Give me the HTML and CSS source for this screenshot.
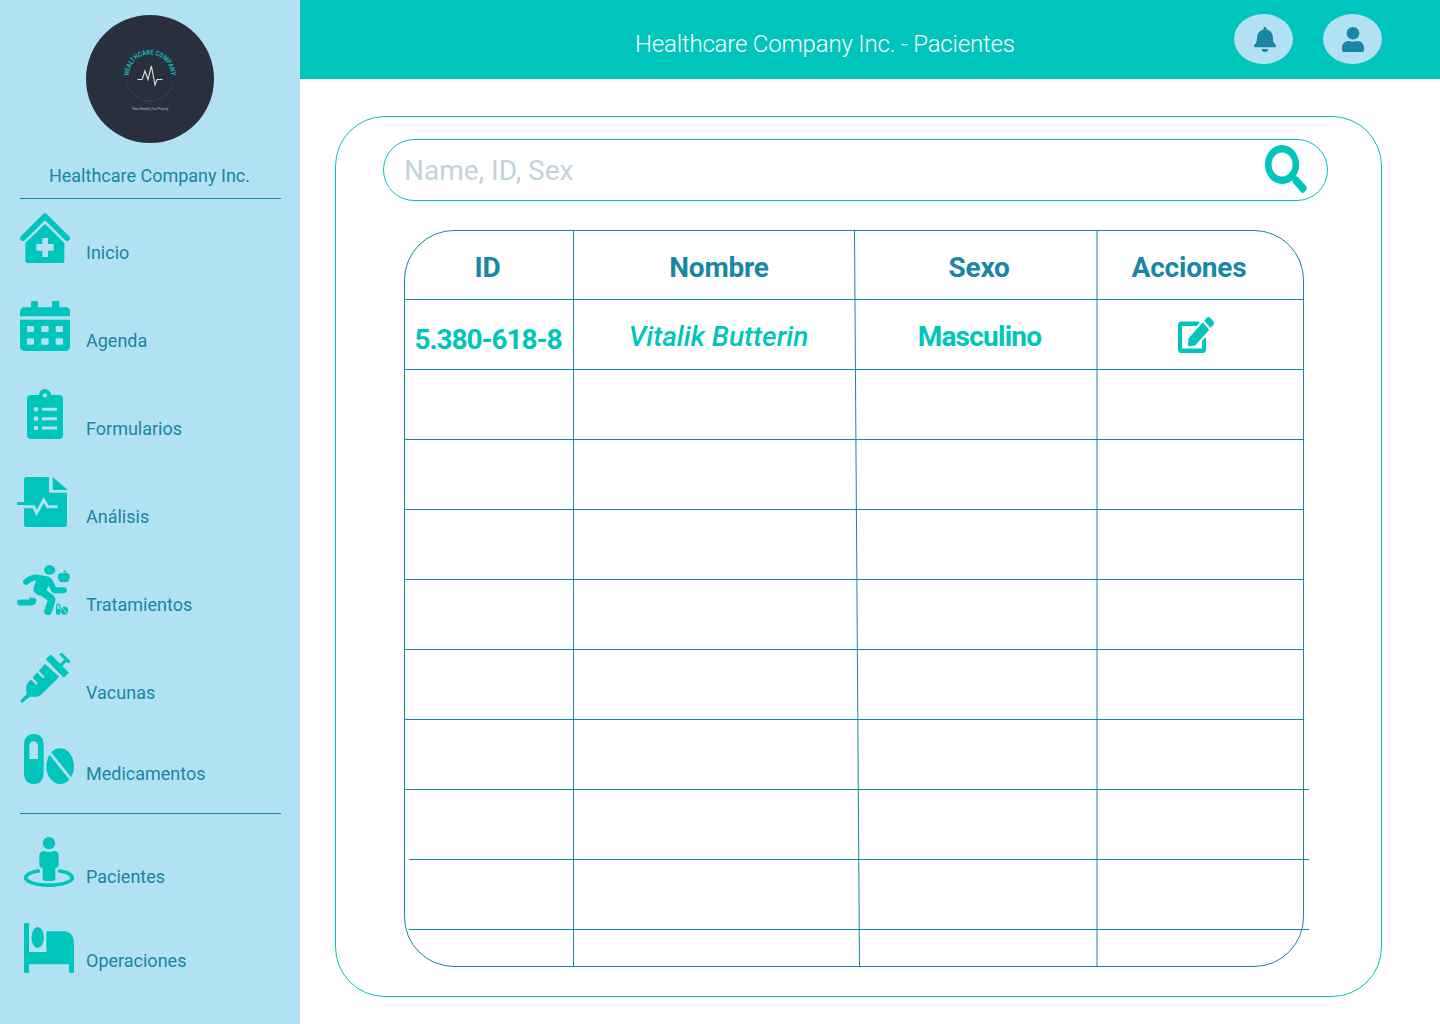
FILE: index.html
```html
<!DOCTYPE html>
<html lang="es">
<head>
<meta charset="utf-8">
<title>Healthcare Company Inc. - Pacientes</title>
<link rel="stylesheet" href="styles.css">
</head>
<body>
<div class="app">
  <aside class="sidebar">
    <svg class="logo" viewBox="0 0 128 128">
      <defs><path id="arc" d="M43 60.500A21 21 0 0 1 85 60.500"/></defs>
      <circle cx="64" cy="64" r="64" fill="#2a303b"/>
      <text class="logo-name"><textPath href="#arc" textLength="65.500" lengthAdjust="spacingAndGlyphs">HEALTHCARE COMPANY</textPath></text>
      <path d="M51.500 64.500h4.500l3-8.500 3 8.500L65.400 51l3.600 19 2-5.500h5.500" fill="none" stroke="#c9ece8" stroke-width="1.100"/>
      <path d="M41.200 69.500A24 24 0 0 0 86.800 69.500" fill="none" stroke="#1f7f8b" stroke-width=".8" stroke-dasharray="1 1.200"/>
      <text class="logo-tag" x="46" y="94.500" textLength="36.500" lengthAdjust="spacingAndGlyphs">Your Health, Our Priority</text>
    </svg>
    <div class="company">Healthcare Company Inc.</div>
    <nav class="menu">
      <a class="item"><svg class="icon" viewBox="0 0 150 150"><path d="M8.500 76L75 9.500l66.500 66.500" fill="none" stroke="currentColor" stroke-width="17" stroke-linejoin="round" stroke-linecap="round"/><path fill-rule="evenodd" d="M75 33l58 57v55q0 5-5 5H21q-5 0-5-5V90zM67 75v18H49v20h18v19h17v-19h17V93H84V75z"/></svg><span>Inicio</span></a>
      <a class="item"><svg class="icon" viewBox="0 0 150 150"><path d="M0 46V33q0-14 14-14h19V4q0-4 4-4h13q4 0 4 4v15h42V4q0-4 4-4h14q4 0 4 4v15h18q14 0 14 14v13z"/><path fill-rule="evenodd" d="M0 56h150v79q0 15-15 15H15q-15 0-15-15zM24 75q-3 0-3 3v12q0 3 3 3h15q3 0 3-3V78q0-3-3-3zm43 0q-3 0-3 3v12q0 3 3 3h16q3 0 3-3V78q0-3-3-3zm43 0q-3 0-3 3v12q0 3 3 3h16q3 0 3-3V78q0-3-3-3zM24 112q-3 0-3 3v13q0 3 3 3h15q3 0 3-3v-13q0-3-3-3zm43 0q-3 0-3 3v13q0 3 3 3h16q3 0 3-3v-13q0-3-3-3zm43 0q-3 0-3 3v13q0 3 3 3h16q3 0 3-3v-13q0-3-3-3z"/></svg><span>Agenda</span></a>
      <a class="item"><svg class="icon" viewBox="0 0 150 150"><rect x="21" y="18" width="108" height="132" rx="12"/><circle cx="75" cy="18" r="18"/><g class="cut"><circle cx="75" cy="19" r="6.500"/><circle cx="48" cy="61" r="7"/><circle cx="48" cy="89" r="7"/><circle cx="48" cy="117" r="7"/><path d="M66 56.500h45v9H66zm0 28h45v9H66zm0 28h45v9H66z"/></g></svg><span>Formularios</span></a>
      <a class="item item-wide"><svg class="icon" viewBox="0 0 150 150"><path d="M28 0h68v47h54v96q0 7-7 7H28q-7 0-7-7V84H4q-4 0-4-4.500T4 75h17V7q0-7 7-7zM107 0l43 37v2h-43z"/><path class="cut-line" d="M21 89h29l9 19 21-39 12 20h30" stroke-width="9"/></svg><span>Análisis</span></a>
      <a class="item item-wide"><svg class="icon icon-run" viewBox="51 44 159 151"><ellipse cx="149" cy="59" rx="17" ry="14"/><g fill="none" stroke="currentColor" stroke-linecap="round" stroke-linejoin="round"><path d="M78 95q18-15 33-13l28 5q10 2 15 16l9 17h29" stroke-width="18"/><path d="M60 157h34q5 0 6-5" stroke-width="18"/><path d="M119 120l30 21q8 5 5 13l-10 30" stroke-width="23"/></g><path d="M89 138q6 10 20 12l-8 8H88z"/><path d="M112 80l30 2q14 5 8 15l-14 31-18 9q-22-11-17-26z"/><path d="M191 70q5-3 10-2 10 2 9 13-2 15-11 15-4 0-7-1-3 1-7 1-9 0-11-15-1-11 9-13 4 0 8 2zM190 68q0-7 9-8 0 8-9 8z"/><path fill-rule="evenodd" d="M168 168q0-8 7-8t7 8v19q0 8-7 8t-7-8zm4 1v8h6v-8q0-4-3-4t-3 4z"/><ellipse cx="194" cy="182" rx="10.500" ry="12.500"/><path class="cut-line" d="M186 171l17 22" stroke-width="2.500"/></svg><span>Tratamientos</span></a>
      <a class="item"><svg class="icon" viewBox="0 0 150 150"><path d="M75 33l43 38-53 53q-7 7-17 7H30L6 150l-6-6 20-21-2-17q0-10 6-17z"/><path class="cut-line" d="M35 76l14 15M55 57l15 15" stroke-width="7" stroke-linecap="round"/><path d="M92 7l52 52-13 12-51-52z" stroke="currentColor" stroke-width="4" stroke-linejoin="round"/><path d="M119 40l18-18M124 4l22 22" fill="none" stroke="currentColor" stroke-width="9" stroke-linecap="round"/></svg><span>Vacunas</span></a>
      <a class="item item-pills"><svg class="icon" viewBox="0 0 150 150"><path fill-rule="evenodd" d="M0 35Q0 0 29.500 0T59 35v80q0 35-29.500 35T0 115zm16 4v36h26V39q0-17-13-17t-13 17z"/><ellipse cx="108.500" cy="96.500" rx="41.500" ry="53.500"/><path class="cut-line" d="M72 50l74 92" stroke-width="8.500"/></svg><span>Medicamentos</span></a>
    </nav>
    <nav class="menu menu-admin">
      <a class="item"><svg class="icon" viewBox="0 0 150 150"><circle cx="75" cy="18.500" r="18.500"/><path d="M60 42q15 6 30 0 14 0 14 14v24q0 12-10 13v30q0 9-9 9H65q-9 0-9-9V93q-10-1-10-13V56q0-14 14-14z"/><path d="M43 102A70 22.500 0 1 0 107 102" fill="none" stroke="currentColor" stroke-width="11" stroke-linecap="round"/></svg><span>Pacientes</span></a>
      <a class="item"><svg class="icon" viewBox="0 0 150 150"><path d="M4 0h7q4 0 4 4v83h52V28q0-3 3-3h50q30 0 30 42v79q0 4-4 4h-7q-4 0-4-4v-22H15v22q0 4-4 4H4q-4 0-4-4V4q0-4 4-4z"/><ellipse cx="41" cy="43.500" rx="18.500" ry="31.500"/></svg><span class="raised">Operaciones</span></a>
    </nav>
  </aside>

  <div class="page">
    <header class="topbar">
      <h1>Healthcare Company Inc. - Pacientes</h1>
      <div class="actions">
        <button class="round"><svg width="22" height="25" viewBox="0 0 448 512" preserveAspectRatio="none"><path d="M224 512c35.320 0 63.970-28.650 63.970-64H160.030c0 35.350 28.650 64 63.970 64zm215.390-149.710c-19.320-20.760-55.470-51.990-55.470-154.290 0-77.700-54.480-139.900-127.940-155.160V32c0-17.670-14.320-32-31.980-32s-31.980 14.330-31.980 32v20.840C118.560 68.100 64.080 130.300 64.080 208c0 102.300-36.150 133.530-55.470 154.290-6 6.450-8.660 14.160-8.610 21.710.11 16.400 12.980 32 32.100 32h383.800c19.120 0 32-15.600 32.100-32 .05-7.550-2.610-15.270-8.610-21.710z"/></svg></button>
        <button class="round round-user"><svg width="22" height="25" viewBox="0 0 448 512" preserveAspectRatio="none"><path d="M224 256c70.700 0 128-57.300 128-128S294.700 0 224 0 96 57.300 96 128s57.300 128 128 128zm89.600 32h-16.700c-22.200 10.200-46.900 16-72.900 16s-50.600-5.800-72.900-16h-16.700C60.200 288 0 348.200 0 422.400V464c0 26.500 21.500 48 48 48h352c26.500 0 48-21.500 48-48v-41.600c0-74.200-60.200-134.400-134.400-134.400z"/></svg></button>
      </div>
    </header>

    <main class="card">
      <div class="search">
        <span>Name, ID, Sex</span>
        <svg width="42" height="48" viewBox="0 0 512 512" preserveAspectRatio="none"><path d="M505 442.700L405.300 343c-4.500-4.500-10.600-7-17-7H372c27.600-35.300 44-79.700 44-128C416 93.100 322.900 0 208 0S0 93.100 0 208s93.100 208 208 208c48.300 0 92.700-16.400 128-44v16.300c0 6.400 2.500 12.500 7 17l99.700 99.700c9.400 9.400 24.600 9.400 33.900 0l28.300-28.300c9.400-9.400 9.400-24.600.1-34zM208 336c-70.700 0-128-57.200-128-128 0-70.700 57.200-128 128-128 70.700 0 128 57.200 128 128 0 70.700-57.200 128-128 128z"/></svg>
      </div>

      <div class="table">
        <div class="row head">
          <b class="h-id">ID</b><b class="h-name">Nombre</b><b class="h-sex">Sexo</b><b class="h-act">Acciones</b>
        </div>
        <div class="row data">
          <b class="d-id">5.380-618-8</b><i class="d-name">Vitalik Butterin</i><b class="d-sex">Masculino</b>
          <span class="d-act"><svg width="36" height="36" viewBox="0 0 576 512" preserveAspectRatio="none"><path d="M402.600 83.200l90.200 90.200c3.800 3.800 3.800 10 0 13.800L274.400 405.600l-92.800 10.300c-12.400 1.400-22.900-9.100-21.500-21.500l10.300-92.800L388.800 83.200c3.800-3.800 10-3.800 13.800 0zm162-22.900l-48.800-48.800c-15.200-15.200-39.900-15.200-55.200 0l-35.400 35.400c-3.800 3.800-3.800 10 0 13.800l90.200 90.200c3.800 3.800 10 3.800 13.800 0l35.400-35.400c15.200-15.300 15.200-40 0-55.200zM384 346.200V448H64V128h229.800c3.200 0 6.200-1.300 8.500-3.500l40-40c7.600-7.600 2.200-20.500-8.500-20.500H48C21.500 64 0 85.500 0 112v352c0 26.500 21.500 48 48 48h352c26.500 0 48-21.500 48-48V306.200c0-10.700-12.900-16-20.500-8.500l-40 40c-2.200 2.300-3.500 5.300-3.500 8.500z"/></svg></span>
        </div>
        <div class="row"></div>
        <div class="row"></div>
        <div class="row"></div>
        <div class="row"></div>
        <div class="row"></div>
        <div class="row long"></div>
        <div class="row long inset"></div>
        <div class="row long inset"></div>
        <svg class="columns" viewBox="0 0 898 735"><path d="M168.500 0V735M449.500 0L454.500 735M692 0V735"/></svg>
      </div>
    </main>
  </div>
</div>
</body>
</html>
```
FILE: styles.css
```css
* { box-sizing: border-box; }

:root {
  --sky: #b2e1f3;
  --teal: #00c5bc;
  --blue: #1886a4;
}

body {
  margin: 0;
  background: #fff;
  font-family: Roboto, "Liberation Sans", sans-serif;
  color: var(--blue);
}

.app { display: flex; width: 1440px; height: 1024px; overflow: hidden; }

.sidebar {
  display: flex;
  flex-direction: column;
  width: 300px;
  padding: 15px 19px 0 20px;
  background: var(--sky);
}

.logo { align-self: flex-start; width: 128px; height: 128px; margin-left: 66px; flex: none; }
.logo-name { font: 700 7px Roboto, sans-serif; fill: #14b8b8; }
.logo-tag { font: 4px Roboto, sans-serif; fill: #b8c2c6; }

.company {
  height: 56px;
  padding: 22px 2px 0 0;
  border-bottom: 1px solid var(--blue);
  font-size: 18px;
  line-height: 21px;
  text-align: center;
}

.menu { display: flex; flex-direction: column; gap: 38px; padding: 14px 0 29px; }
.menu-admin { gap: 36px; padding: 23px 0 0; border-top: 1px solid var(--blue); }
.item { display: flex; align-items: flex-end; height: 50px; font-size: 18px; line-height: 21px; }
.item span { margin-left: 16px; }
.item-wide { margin-left: -3px; }
.item-wide .icon + span { margin-left: 19px; }
.item .icon-run + span { margin-left: 16px; }
.item-pills { margin: -7px 0 0 4px; }
.menu-admin .item { margin-left: 4px; }
.item-pills span, .menu-admin .item span { margin-left: 12px; }
.raised { padding-bottom: 2px; }
.icon { width: 50px; height: 50px; flex: none; color: var(--teal); fill: currentColor; }
.icon-run { width: 53px; }
.cut { fill: var(--sky); }
.cut-line { fill: none; stroke: var(--sky); }

.page { display: flex; flex-direction: column; flex: 1; }

.topbar {
  display: grid;
  grid-template-columns: 1fr auto;
  height: 79px;
  padding: 14px 58px 0 335px;
  background: var(--teal);
}
h1 { margin: 15px 0 0; font-size: 24px; line-height: 30px; font-weight: 300; letter-spacing: -.19px; color: #fff; white-space: nowrap; }
.actions { display: flex; gap: 30px; }
.round {
  display: flex;
  justify-content: center;
  width: 59px;
  height: 50px;
  padding: 13px 0 0 2px;
  border: 0;
  border-radius: 50%;
  background: var(--sky);
}
.round-user { padding-left: 0; }
.round svg { fill: var(--blue); }

.card {
  display: flex;
  flex-direction: column;
  width: 1047px;
  height: 881px;
  margin: 37px 0 0 35px;
  padding: 22px 53px 0 47px;
  border: 1px solid var(--teal);
  border-radius: 50px;
}

.search {
  display: flex;
  justify-content: space-between;
  height: 62px;
  padding: 5px 20px 0;
  border: 1px solid var(--teal);
  border-radius: 31px;
  font-size: 28px;
  line-height: 52px;
  color: #c1d3dc;
}
.search svg { fill: var(--teal); }

.table {
  position: relative;
  width: 900px;
  height: 737px;
  margin: 29px 0 0 21px;
  border: 1px solid var(--blue);
  border-radius: 50px;
}
.row {
  display: grid;
  grid-template-columns: 168px 282px 242px 206px;
  height: 70px;
  border-bottom: 1px solid var(--blue);
  font-size: 28px;
  line-height: 34px;
  text-align: center;
  white-space: nowrap;
}
.row.long { margin-right: -6px; }
.row.inset { margin-left: 4px; }
.head { height: 69px; padding-top: 20px; letter-spacing: -.2px; }
.data { padding-top: 20px; color: var(--teal); }
.data i { font-weight: 500; }
.data .d-id { margin-left: -2px; padding-top: 3px; letter-spacing: -1.05px; }
.h-id { margin-left: -3px; }
.h-name { margin-left: 10px; }
.h-sex { margin-left: 6px; }
.h-act { margin-left: -22px; }
.d-name { margin-left: 9px; }
.d-sex { margin-left: 7px; letter-spacing: -.75px; }
.d-act { margin-left: -9px; }
.d-act svg { margin-top: -3px; fill: var(--teal); }

.columns { position: absolute; inset: 0; width: 898px; height: 735px; fill: none; stroke: var(--blue); }
```
